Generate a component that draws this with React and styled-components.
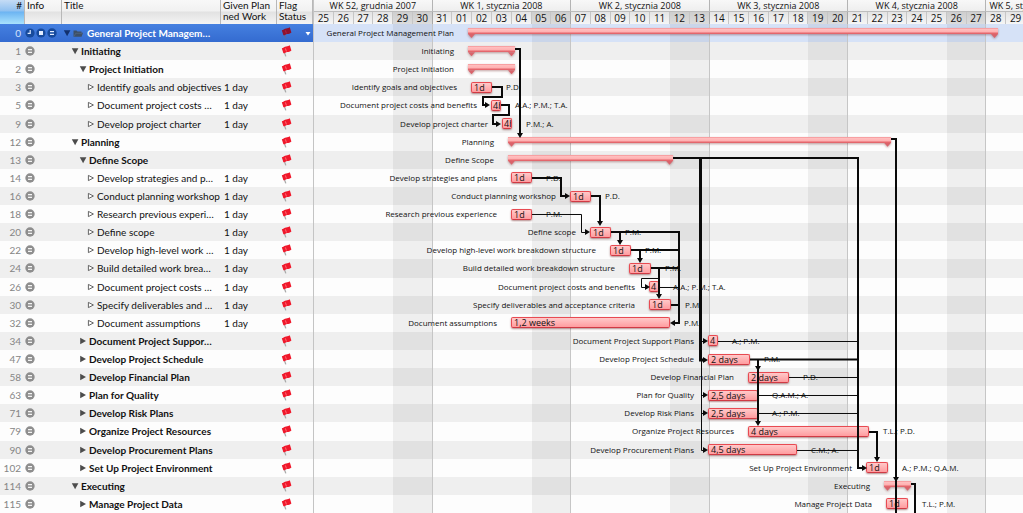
import React from "react";
import styled, { createGlobalStyle, css } from "styled-components";

const HEADER = 24;
const TABLE_WIDTH = 314;
const TIMELINE_WIDTH = 712;
const DAYS = 36;

const tasks = [
  { id: 0, level: 0, title: "General Project Managem…", name: "General Project Management Plan", kind: "summary", from: 468, to: 998, open: true, selected: true },
  { id: 1, level: 1, title: "Initiating", kind: "summary", from: 468, to: 515, open: true },
  { id: 2, level: 2, title: "Project Initiation", kind: "summary", from: 468, to: 515, open: true },
  { id: 3, level: 3, title: "Identify goals and objectives", from: 471, to: 492, work: "1 day", text: "1d", who: "P.D." },
  { id: 5, level: 3, title: "Document project costs …", name: "Document project costs and benefits", from: 491, to: 501, work: "1 day", text: "4h", who: "A.A.; P.M.; T.A." },
  { id: 9, level: 3, title: "Develop project charter", from: 502, to: 512, work: "1 day", text: "4h", who: "P.M.; A." },
  { id: 12, level: 1, title: "Planning", kind: "summary", from: 508, to: 891, open: true },
  { id: 13, level: 2, title: "Define Scope", kind: "summary", from: 508, to: 673, open: true },
  { id: 14, level: 3, title: "Develop strategies and p…", name: "Develop strategies and plans", from: 511, to: 532, work: "1 day", text: "1d", who: "P.D." },
  { id: 16, level: 3, title: "Conduct planning workshop", from: 570, to: 591, work: "1 day", text: "1d", who: "P.D." },
  { id: 18, level: 3, title: "Research previous experi…", name: "Research previous experience", from: 511, to: 532, work: "1 day", text: "1d", who: "P.M." },
  { id: 20, level: 3, title: "Define scope", from: 590, to: 611, work: "1 day", text: "1d", who: "P.M." },
  { id: 22, level: 3, title: "Develop high-level work …", name: "Develop high-level work breakdown structure", from: 610, to: 631, work: "1 day", text: "1d", who: "P.M." },
  { id: 24, level: 3, title: "Build detailed work brea…", name: "Build detailed work breakdown structure", from: 629, to: 651, work: "1 day", text: "1d", who: "P.M." },
  { id: 26, level: 3, title: "Document project costs …", name: "Document project costs and benefits", from: 649, to: 659, work: "1 day", text: "4", who: "A.A.; P.M.; T.A." },
  { id: 30, level: 3, title: "Specify deliverables and …", name: "Specify deliverables and acceptance criteria", from: 649, to: 671, work: "1 day", text: "1d", who: "P.M." },
  { id: 32, level: 3, title: "Document assumptions", from: 511, to: 670, work: "1 day", text: "1,2 weeks", who: "P.M." },
  { id: 34, level: 2, title: "Document Project Suppor…", name: "Document Project Support Plans", from: 708, to: 718, text: "4", who: "A.; P.M." },
  { id: 47, level: 2, title: "Develop Project Schedule", from: 708, to: 750, text: "2 days", who: "P.M." },
  { id: 58, level: 2, title: "Develop Financial Plan", from: 748, to: 789, text: "2 days", who: "P.D." },
  { id: 63, level: 2, title: "Plan for Quality", from: 708, to: 758, text: "2,5 days", who: "Q.A.M.; A." },
  { id: 71, level: 2, title: "Develop Risk Plans", from: 708, to: 758, text: "2,5 days", who: "A.; P.M." },
  { id: 79, level: 2, title: "Organize Project Resources", from: 748, to: 869, text: "4 days", who: "T.L.; P.D." },
  { id: 90, level: 2, title: "Develop Procurement Plans", from: 708, to: 797, text: "4,5 days", who: "C.M.; A." },
  { id: 102, level: 2, title: "Set Up Project Environment", from: 866, to: 888, text: "1d", who: "A.; P.M.; Q.A.M." },
  { id: 114, level: 1, title: "Executing", kind: "summary", from: 884, to: 911, open: true },
  { id: 115, level: 2, title: "Manage Project Data", from: 886, to: 908, text: "1d", who: "T.L.; P.M." },
];

const weeks = [
  { label: "WK 52, grudnia 2007", days: 6 },
  { label: "WK 1, stycznia 2008", days: 7 },
  { label: "WK 2, stycznia 2008", days: 7 },
  { label: "WK 3, stycznia 2008", days: 7 },
  { label: "WK 4, stycznia 2008", days: 7 },
  { label: "WK 5, stycznia 2008", days: 2 },
];

const dayCells = Array.from({ length: DAYS }, (_, i) => ({
  label: String(i < 7 ? 25 + i : i - 6).padStart(2, "0"),
  weekend: i % 7 === 4 || i % 7 === 5,
  weekEnd: i % 7 === 5,
}));

const links = [
  { d: "M515 49H520V133", w: 2, tip: [520, 138, "down"] },
  { d: "M492 87H502V97H483V105H486", w: 2, tip: [490, 105, "right"] },
  { d: "M501 105H509V115H493V124H497", w: 2, tip: [501, 124, "right"] },
  { d: "M891 139H896V513", w: 2, tip: [896, 482, "down"] },
  { d: "M673 158H858V468H862", w: 2, tip: [867, 468, "right"] },
  { d: "M700.5 158V360H704", w: 3, tip: [708, 360, "right"] },
  { d: "M701.5 359V450.5H704", w: 1, tip: [708, 450, "right"] },
  { d: "M701 341.5H704", w: 1, tip: [708, 341, "right"] },
  { d: "M701 395.5H704", w: 1, tip: [708, 395, "right"] },
  { d: "M701 413.5H704", w: 1, tip: [708, 413, "right"] },
  { d: "M532 178H561V196H566", w: 2, tip: [570, 196, "right"] },
  { d: "M591 196H600V222", w: 2, tip: [600, 226, "down"] },
  { d: "M532 214.5H581.5V232.5H586", w: 1, tip: [590, 232, "right"] },
  { d: "M611 232H679V323H674", w: 2, tip: [670, 323, "left"] },
  { d: "M620 232V241", w: 2, tip: [620, 245, "down"] },
  { d: "M631 250H679", w: 2 },
  { d: "M640 250V258", w: 2, tip: [640, 263, "down"] },
  { d: "M651 268H679", w: 2 },
  { d: "M659 268V295", w: 2, tip: [659, 299, "down"] },
  { d: "M659 278.5H641.5V287.5H646", w: 1, tip: [650, 287, "right"] },
  { d: "M659 287.5H679", w: 1 },
  { d: "M671 305H679V323", w: 2 },
  { d: "M718 341.5H858", w: 1 },
  { d: "M750 359.5H858", w: 2 },
  { d: "M758 360V422", w: 2, tip: [758, 426, "down"] },
  { d: "M758 360V367", w: 2, tip: [758, 371, "down"] },
  { d: "M789 377.5H858", w: 1 },
  { d: "M758 395.5H858", w: 1 },
  { d: "M758 413.5H858", w: 1 },
  { d: "M797 450.5H858", w: 1 },
  { d: "M869 432H877V458", w: 2, tip: [877, 462, "down"] },
  { d: "M911 484H915V513", w: 2 },
];

const tipPath = {
  down: "l-3 -5h6z",
  right: "l-5 -3v6z",
  left: "l5 -3v6z",
};

const Global = createGlobalStyle`
  *, *::before, *::after { box-sizing: border-box; }
  body {
    margin: 0;
    overflow-x: hidden;
    background: #fdfdfd;
    color: #111;
    font-family: Lato, "Open Sans", sans-serif;
    font-size: 10px;
  }
`;

const rowTracks = css`
  grid-template-rows: ${HEADER}px repeat(${tasks.length}, minmax(18px, 1fr));
`;

const Page = styled.main`
  display: grid;
  grid-template-columns: ${TABLE_WIDTH}px minmax(0, 1fr);
  min-height: 100vh;
`;

const TaskTable = styled.table`
  display: grid;
  ${rowTracks}
  border-right: 1px solid #c4c4c4;

  thead, tbody { display: contents; }
`;

const TableRow = styled.tr`
  display: grid;
  grid-template-columns: 25px 37px 159px 56px 1fr;
  align-items: center;
  min-width: 0;
  background: ${(p) => (p.$selected ? "linear-gradient(#4580e0, #346bd0)" : p.$striped ? "#efefef" : "#fdfdfd")};
  color: ${(p) => (p.$selected ? "#fff" : "#111")};
`;

const HeadRow = styled(TableRow)`
  align-items: stretch;
  background: linear-gradient(#f8f8f8 0, #f1f1f1 11px, #e2e2e2 12px, #f4f4f4 24px);
`;

const HeadCell = styled.th`
  padding: 0 2px;
  border-right: 1px solid #b8b8b8;
  font-weight: 400;
  line-height: 11px;
  text-align: ${(p) => (p.$end ? "right" : "left")};
  background: ${(p) => (p.$sorted ? "linear-gradient(#c5dcf5 0, #8fc0f0 11px, #6cb4f2 12px, #a9e2fd 24px)" : "none")};
`;

const Cell = styled.td`
  display: flex;
  align-items: center;
  min-width: 0;
  padding: 0;
  line-height: 16px;
  white-space: nowrap;
`;

const NumberCell = styled(Cell)`
  justify-content: flex-end;
  padding-right: 4px;
  color: ${(p) => (p.$selected ? "#d5e3fb" : "#858585")};
`;

const InfoCell = styled(Cell)`
  gap: 1px;
`;

const TitleCell = styled(Cell)`
  gap: 2px;
  padding-left: ${(p) => p.$level * 8 + 1}px;
  font-weight: ${(p) => (p.$bold ? 700 : 400)};
`;

const TitleText = styled.span`
  padding-left: ${(p) => (p.$spaced ? 2 : 0)}px;
`;

const WorkCell = styled(Cell)`
  padding-left: 3px;
`;

const FlagCell = styled(Cell)`
  justify-content: space-between;
  padding: 0 2px 0 4px;
`;

const IconButton = styled.button`
  display: flex;
  padding: 0;
  border: 0;
  background: none;
  cursor: pointer;
`;

const ChartPanel = styled.section`
  min-width: 0;
  overflow: hidden;
  font-family: "Open Sans", "Noto Sans", sans-serif;
`;

const Timeline = styled.div`
  display: grid;
  ${rowTracks}
  grid-template-columns: repeat(${DAYS}, minmax(0, 1fr));
  width: ${TIMELINE_WIDTH}px;
  height: 100%;
`;

const Scale = styled.header`
  grid-area: 1 / 1 / 2 / -1;
  display: grid;
  grid-template-columns: subgrid;
  grid-template-rows: 12px 12px;
`;

const WeekCell = styled.div`
  grid-column: span ${(p) => p.$days};
  padding-left: ${(p) => (p.$days < 6 ? 3 : 0)}px;
  border-right: 1px solid #b4b4b4;
  border-bottom: 1px solid #bdbdbd;
  background: linear-gradient(#f8f8f8, #eee);
  font-size: 9px;
  line-height: 11px;
  text-align: ${(p) => (p.$days < 6 ? "left" : "center")};
  white-space: nowrap;
`;

const DayCell = styled.div`
  border-right: 1px solid ${(p) => (p.$weekEnd ? "#a8a8a8" : "#c6c6c6")};
  background: ${(p) => (p.$weekend ? "linear-gradient(#cecece, #dcdcdc)" : "linear-gradient(#e4e4e4, #f6f6f6)")};
  line-height: 12px;
  text-align: center;
`;

const ChartRow = styled.div`
  grid-row: ${(p) => p.$row};
  grid-column: 1 / -1;
  display: flex;
  align-items: center;
  background: ${(p) => (p.$selected ? "#d6e2f7" : p.$striped ? "#efefef" : "#fdfdfd")};
`;

const DayShade = styled.div`
  grid-row: 2 / -1;
  grid-column: ${(p) => p.$column};
  border-right: ${(p) => (p.$weekEnd ? "1px solid #c6c6c6" : "0")};
  background: rgba(0, 0, 0, 0.055);
`;

const Content = styled(ChartRow)`
  z-index: 1;
  background: none;
  font-size: 8px;
  line-height: 12px;
  white-space: nowrap;
`;

const BarLabel = styled.span`
  flex: none;
  padding-right: 14px;
  text-align: right;
`;

const TaskBar = styled.div`
  flex: none;
  height: 11px;
  overflow: hidden;
  padding-left: ${(p) => (p.$narrow ? 1 : 2)}px;
  border: 1px solid #e84a52;
  border-bottom-color: #d03a44;
  border-radius: 2px;
  background: linear-gradient(#ffc9c9, #ff9c9f);
  box-shadow: 0 1px 2px rgba(90, 0, 0, 0.45);
  font-size: 9px;
  line-height: 9px;
`;

const SummaryBar = styled.div`
  flex: none;
  display: flex;
  justify-content: space-between;
  height: 10px;
  background: linear-gradient(#f08085 0, #ffc0c0 1px, #ffb0b1 4px, #e4666c 5px, #e4666c 6px, transparent 6px);
  filter: drop-shadow(0 1px 1px rgba(90, 0, 0, 0.35));

  &::before, &::after {
    content: "";
    width: 7px;
    height: 4px;
    align-self: flex-end;
    background: #d9636b;
    clip-path: polygon(0 0, 100% 0, 50% 100%);
  }
`;

const Resources = styled.span`
  padding-left: 14px;
`;

const Links = styled.svg`
  z-index: 2;
  grid-area: 2 / 1 / -1 / -1;
  width: 100%;
  height: 100%;
  min-height: 0;
  contain: size;
  pointer-events: none;
`;

function NoteIcon({ dark }) {
  return (
    <svg width="10" height="10" viewBox="0 0 10 10" aria-hidden="true">
      <circle cx="5" cy="5" r="4.7" fill={dark ? "#174a9c" : "#8e8e8e"} />
      <path d="M3 3.5h4M3 6.5h4" stroke={dark ? "#e4edff" : "#f4f4f4"} strokeWidth="1" />
      <path d="M3 5h4" stroke={dark ? "#6c92d0" : "#c4c4c4"} strokeWidth="1" />
    </svg>
  );
}

function ClockIcon() {
  return (
    <svg width="10" height="10" viewBox="0 0 10 10" aria-hidden="true">
      <circle cx="5" cy="5" r="4.6" fill="#174a9c" />
      <path d="M5.2 2v3.3H2.6" fill="none" stroke="#dce8ff" strokeWidth="1.2" />
    </svg>
  );
}

function PageIcon() {
  return (
    <svg width="10" height="10" viewBox="0 0 10 10" aria-hidden="true">
      <circle cx="5" cy="5" r="4.6" fill="#174a9c" />
      <rect x="3" y="3" width="4" height="4" fill="#e4edff" />
    </svg>
  );
}

function FolderIcon() {
  return (
    <svg width="10" height="9" viewBox="0 0 10 9" aria-hidden="true">
      <path d="M.5 7.8V1.6h3l1 1h4v1.2H10L8.6 7.8z" fill="#3d5068" />
      <path d="M1.2 7.4 2.6 4.3h6.6" fill="none" stroke="#566a84" strokeWidth=".7" />
    </svg>
  );
}

function FlagIcon({ dark }) {
  return (
    <svg width="11" height="12" viewBox="0 0 11 12" aria-hidden="true">
      <path d="M2 3.4 4.8 11.4" stroke={dark ? "#5b6ea0" : "#a9a9a9"} strokeWidth="1.3" />
      <path d="M.8 3.2C2.6 3.2 3.6 1.4 5.2 1.5 6.6 1.5 7.8 1 8.8.3L10.4 5.4C9 6.7 7.6 6.8 6.2 6.9 4.8 7 4 8.4 2.4 8.3z" fill={dark ? "#8e1230" : "#f0182b"} />
      <path d="M4.4 3.4 5.4 6.4" stroke={dark ? "#b5294a" : "#ff8088"} strokeWidth=".8" />
    </svg>
  );
}

function Disclosure({ task }) {
  const leaf = task.level === 3;
  const fill = leaf ? "#fff" : task.selected ? "#12316e" : "#4c4c4c";
  return (
    <IconButton type="button" aria-label={`Toggle ${task.title}`} aria-expanded={!!task.open}>
      <svg width="8" height="8" viewBox="0 0 8 8" aria-hidden="true">
        {task.open ? (
          <path d="M.8 1.2h6.6L4.1 7.2z" fill={fill} />
        ) : leaf ? (
          <path d="M1.4 1.4v5.2L6.4 4z" fill={fill} stroke="#555" strokeWidth=".9" />
        ) : (
          <path d="M1.2.8v6.4L7 4z" fill={fill} />
        )}
      </svg>
    </IconButton>
  );
}

function TaskRow({ task, index }) {
  return (
    <TableRow $selected={task.selected} $striped={index % 2 === 1}>
      <NumberCell $selected={task.selected}>{task.id}</NumberCell>
      <InfoCell>
        {task.selected && <ClockIcon />}
        {task.selected && <PageIcon />}
        <NoteIcon dark={task.selected} />
      </InfoCell>
      <TitleCell $level={task.level} $bold={task.level < 3}>
        <Disclosure task={task} />
        {task.selected && <FolderIcon />}
        <TitleText $spaced={task.selected}>{task.title}</TitleText>
      </TitleCell>
      <WorkCell>{task.work}</WorkCell>
      <FlagCell>
        <FlagIcon dark={task.selected} />
        {task.selected && (
          <IconButton type="button" aria-label="Choose flag">
            <svg width="6" height="5" viewBox="0 0 6 5" aria-hidden="true">
              <path d="M.5 1h5L3 4.4z" fill="#fff" />
            </svg>
          </IconButton>
        )}
      </FlagCell>
    </TableRow>
  );
}

function ChartContent({ task, row }) {
  const size = { width: task.to - task.from };
  return (
    <Content $row={row}>
      <BarLabel style={{ width: task.from - TABLE_WIDTH }}>{task.name || task.title}</BarLabel>
      {task.kind === "summary" ? (
        <SummaryBar style={size} />
      ) : (
        <TaskBar style={size} $narrow={size.width < 12}>{task.text}</TaskBar>
      )}
      {task.who && <Resources>{task.who}</Resources>}
    </Content>
  );
}

export default function App() {
  return (
    <>
      <Global />
      <Page>
        <TaskTable>
          <thead>
            <HeadRow>
              <HeadCell $end $sorted>#</HeadCell>
              <HeadCell>Info</HeadCell>
              <HeadCell>Title</HeadCell>
              <HeadCell>Given Plan<br />ned Work</HeadCell>
              <HeadCell>Flag<br />Status</HeadCell>
            </HeadRow>
          </thead>
          <tbody>
            {tasks.map((task, i) => <TaskRow key={task.id} task={task} index={i} />)}
          </tbody>
        </TaskTable>
        <ChartPanel aria-label="Gantt chart">
          <Timeline>
            <Scale>
              {weeks.map((w) => <WeekCell key={w.label} $days={w.days}>{w.label}</WeekCell>)}
              {dayCells.map((d, i) => (
                <DayCell key={i} $weekend={d.weekend} $weekEnd={d.weekEnd}>{d.label}</DayCell>
              ))}
            </Scale>
            {tasks.map((t, i) => (
              <ChartRow key={t.id} $row={i + 2} $selected={t.selected} $striped={i % 2 === 1} />
            ))}
            {dayCells.map((d, i) => d.weekend && <DayShade key={i} $column={i + 1} $weekEnd={d.weekEnd} />)}
            {tasks.map((t, i) => <ChartContent key={t.id} task={t} row={i + 2} />)}
            <Links viewBox="314 24 712 489" preserveAspectRatio="none" aria-hidden="true">
              {links.map((l) => (
                <g key={l.d}>
                  <path d={l.d} fill="none" stroke="#0a0a0a" strokeWidth={l.w} />
                  {l.tip && <path d={`M${l.tip[0]} ${l.tip[1]}${tipPath[l.tip[2]]}`} fill="#0a0a0a" />}
                </g>
              ))}
            </Links>
          </Timeline>
        </ChartPanel>
      </Page>
    </>
  );
}
